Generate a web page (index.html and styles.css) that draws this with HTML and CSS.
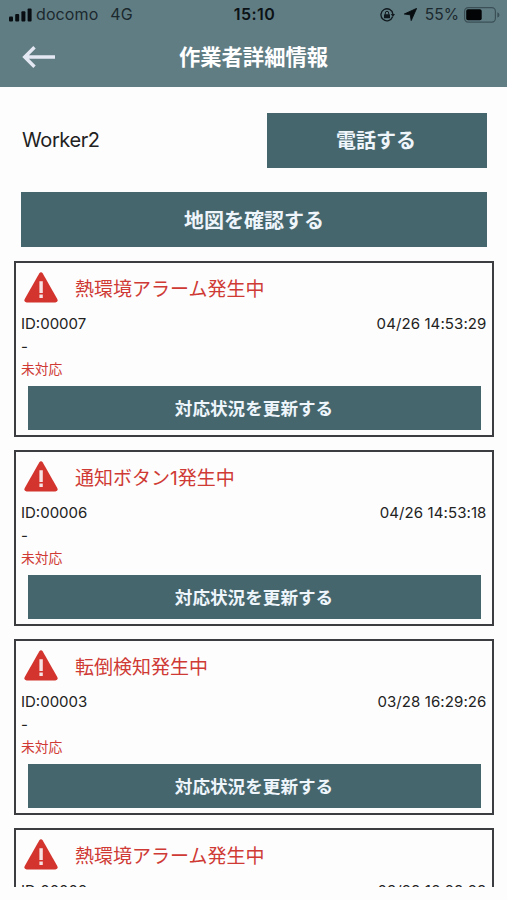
FILE: index.html
```html
<!DOCTYPE html>
<html lang="ja">
<head>
<meta charset="utf-8">
<meta name="viewport" content="width=device-width, initial-scale=1">
<title>作業者詳細情報</title>
<link rel="stylesheet" href="styles.css">
</head>
<body>
<svg class="defs" width="0" height="0" aria-hidden="true">
  <symbol id="warning" viewBox="0 0 34 31">
    <path d="M15.2 1.4Q17-.9 18.8 1.4L33.4 27.2Q34.4 30.3 31.4 30.4H2.6Q-.4 30.3.6 27.2Z" fill="#d3342d"/>
    <path d="M15.4 9.3h3.4v11.6h-3.4zM15.4 22.6h3.4v3.3h-3.4z" fill="#f7e3e4"/>
  </symbol>
</svg>
<div class="screen">
  <header class="header">
    <div class="status-bar">
      <div class="carrier">
        <svg class="signal" width="23" height="14" viewBox="0 0 23 14" fill="#070d10"><rect x="0" y="8.5" width="4" height="5" rx="1"/><rect x="6.2" y="6" width="4" height="7.5" rx="1"/><rect x="12.4" y="3.3" width="4" height="10.2" rx="1"/><rect x="18.6" y=".5" width="4" height="13" rx="1"/></svg>
        <span class="operator">docomo</span>
        <span class="network">4G</span>
      </div>
      <span class="clock">15:10</span>
      <div class="indicators">
        <svg width="15" height="14" viewBox="0 0 15 14" fill="none" stroke="#10191d"><path d="M12.6 8.8A6 6 0 1 1 12.9 6" stroke-width="1.3"/><path d="M10.8 6h4.2l-2.1 3z" fill="#10191d" stroke="none"/><rect x="4" y="6.3" width="6" height="4" rx=".6" fill="#10191d" stroke="none"/><path d="M5.3 6.6V5a1.7 1.7 0 0 1 3.4 0v1.6" stroke-width="1"/></svg>
        <svg class="location" width="13" height="13" viewBox="0 0 13 13" fill="#070d10"><path d="M12.6.4 7.2 12.6 6.3 6.8.3 6z" stroke="#070d10" stroke-width=".9" stroke-linejoin="round"/></svg>
        <span class="percent">55%</span>
        <svg class="battery" width="36" height="16" viewBox="0 0 36 16"><rect x=".6" y=".6" width="30.8" height="14.5" rx="3.6" fill="none" stroke="#3b5056" stroke-width="1.2"/><rect x="2.2" y="2.3" width="15.5" height="11" rx="1.8" fill="#020405"/><path d="M33.3 5.3q2.2.5 2.2 2.6t-2.2 2.6z" fill="#3b5056"/></svg>
      </div>
    </div>
    <div class="title-bar">
      <svg class="back" width="34" height="22" viewBox="0 0 34 22" fill="none" stroke="#e4e8f2" stroke-width="3.4"><path d="M12.5 1.2 2.7 11l9.8 9.8M3 11h30"/></svg>
      <h1>作業者詳細情報</h1>
    </div>
  </header>
  <main class="content">
    <div class="worker">
      <span class="worker-name">Worker2</span>
      <button class="button call">電話する</button>
    </div>
    <button class="button map">地図を確認する</button>
    <div class="alarms">
      <article class="card">
        <h2 class="alarm"><svg class="icon"><use href="#warning"/></svg><span>熱環境アラーム発生中</span></h2>
        <div class="meta"><span>ID:00007</span><time>04/26 14:53:29</time></div>
        <div class="note">-</div>
        <div class="state">未対応</div>
        <button class="button update">対応状況を更新する</button>
      </article>
      <article class="card">
        <h2 class="alarm"><svg class="icon"><use href="#warning"/></svg><span>通知ボタン1発生中</span></h2>
        <div class="meta"><span>ID:00006</span><time>04/26 14:53:18</time></div>
        <div class="note">-</div>
        <div class="state">未対応</div>
        <button class="button update">対応状況を更新する</button>
      </article>
      <article class="card">
        <h2 class="alarm"><svg class="icon"><use href="#warning"/></svg><span>転倒検知発生中</span></h2>
        <div class="meta"><span>ID:00003</span><time>03/28 16:29:26</time></div>
        <div class="note">-</div>
        <div class="state">未対応</div>
        <button class="button update">対応状況を更新する</button>
      </article>
      <article class="card">
        <h2 class="alarm"><svg class="icon"><use href="#warning"/></svg><span>熱環境アラーム発生中</span></h2>
        <div class="meta"><span>ID:00002</span><time>03/28 16:28:28</time></div>
      </article>
    </div>
  </main>
</div>
</body>
</html>
```

FILE: styles.css
```css
* {
  box-sizing: border-box;
}

body {
  margin: 0;
  background: #fdfdfd;
  color: #222;
  font-family: Inter, "Noto Sans CJK JP", sans-serif;
}

.defs {
  position: absolute;
}

.screen {
  height: 900px;
  overflow: hidden;
}

.header {
  height: 87px;
  background: #617d84;
}

.status-bar {
  display: grid;
  grid-template-columns: 1fr auto 1fr;
  align-items: center;
  height: 29px;
  padding: 0 7px 0 9px;
  color: #1b292e;
  font-size: 16px;
  line-height: 29px;
}

.carrier,
.indicators {
  display: flex;
  align-items: center;
}

.operator {
  margin-left: 4px;
  letter-spacing: .1px;
}

.network {
  margin-left: 12px;
}

.clock {
  color: #0b1215;
  font-weight: 600;
  letter-spacing: .5px;
}

.indicators {
  justify-content: flex-end;
}

.location {
  margin-left: 9px;
}

.percent {
  margin-left: 8px;
  font-size: 15.6px;
}

.battery {
  margin-left: 5px;
}

.title-bar {
  display: grid;
  grid-template-columns: 60px 1fr 60px;
  align-items: center;
  height: 56px;
}

.back {
  margin-left: 22px;
}

h1 {
  margin: 0;
  color: #fff;
  font-size: 21.3px;
  font-weight: 700;
  line-height: 56px;
  text-align: center;
}

.content {
  height: 800px;
  padding: 26px 13.5px 0 14px;
  overflow: hidden;
}

.worker {
  display: flex;
  align-items: center;
  justify-content: space-between;
  height: 55px;
  margin: 0 6.5px 24px 8px;
}

.worker-name {
  padding-bottom: 1px;
  font-size: 20px;
  letter-spacing: -.4px;
}

.button {
  display: block;
  padding: 0 0 2px;
  border: 0;
  border-radius: 0;
  background: #45666d;
  color: #eef5fb;
  font-family: inherit;
  font-size: 20px;
  font-weight: 700;
  text-align: center;
}

.call {
  width: 220px;
  height: 55px;
  padding-right: 2px;
}

.map {
  width: 466px;
  height: 55px;
  margin: 0 7px 14px;
  padding-bottom: 1px;
}

.alarms {
  display: grid;
  gap: 13.5px;
}

.card {
  height: 175.5px;
  padding: 9px 5px 0;
  border: 2px solid #3b3d40;
}

.alarm {
  display: flex;
  align-items: center;
  height: 32px;
  margin: 0 0 0 3px;
  color: #cf3a35;
  font-size: 19px;
  font-weight: 400;
  line-height: 32px;
}

.alarm span {
  padding-top: 3px;
}

.icon {
  width: 34px;
  height: 31px;
  margin: -2px 17px 0 0;
}

.meta {
  display: flex;
  justify-content: space-between;
  margin-top: 9px;
  font-size: 15px;
  line-height: 22px;
}

.meta time {
  letter-spacing: .1px;
}

.note {
  font-size: 15px;
  line-height: 23px;
}

.state {
  color: #cf3a35;
  font-size: 13.8px;
  line-height: 22px;
}

.update {
  width: 453px;
  height: 44px;
  margin: 6px 6px 0 6.5px;
  font-size: 17.6px;
}
```
